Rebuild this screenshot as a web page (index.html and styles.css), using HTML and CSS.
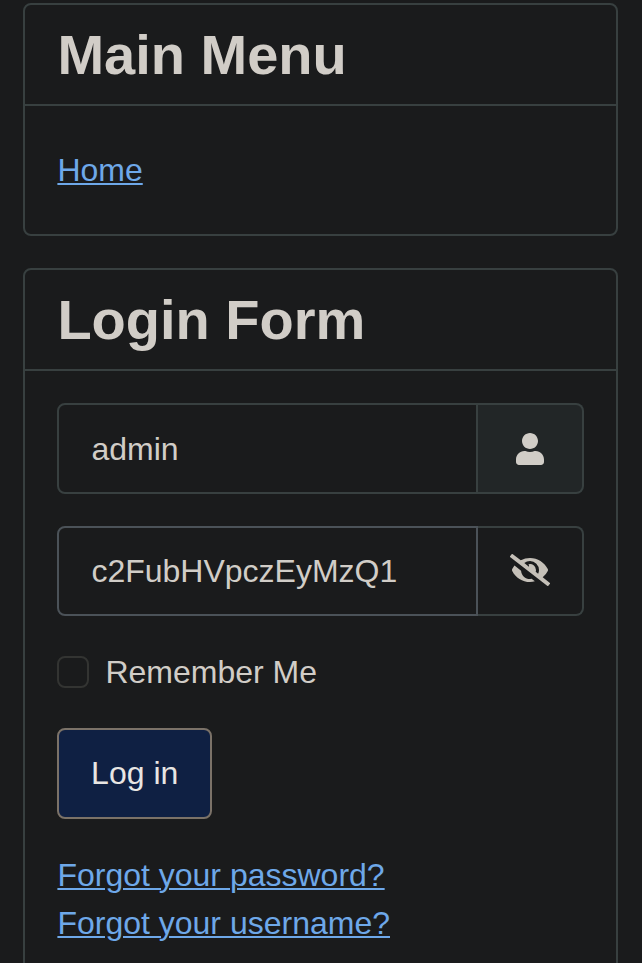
FILE: index.html
```html
<!DOCTYPE html>
<html lang="en">
<head>
<meta charset="utf-8">
<title>Login</title>
<link rel="stylesheet" href="styles.css">
</head>
<body>
<aside class="sidebar">
  <section class="card">
    <h3 class="card-header">Main Menu</h3>
    <nav class="card-body menu"><a href="#">Home</a></nav>
  </section>
  <section class="card">
    <h3 class="card-header">Login Form</h3>
    <form class="card-body login">
      <div class="input-group">
        <div class="field">admin</div>
        <span class="addon addon-user"><svg width="28" height="32" viewBox="0 0 448 512"><path d="M224 256c70.7 0 128-57.3 128-128S294.7 0 224 0 96 57.3 96 128s57.3 128 128 128zm89.6 32h-16.7c-22.2 10.2-46.9 16-72.9 16s-50.6-5.8-72.9-16h-16.7C60.2 288 0 348.2 0 422.4V464c0 26.5 21.5 48 48 48h352c26.5 0 48-21.5 48-48v-41.6c0-74.2-60.2-134.4-134.4-134.4z"/></svg></span>
      </div>
      <div class="input-group password">
        <div class="field">c2FubHVpczEyMzQ1</div>
        <span class="addon addon-eye"><svg width="40" height="32" viewBox="0 0 640 512"><path d="M320 400c-75.85 0-137.25-58.71-142.9-133.11L72.2 185.82c-13.79 17.3-26.48 35.59-36.72 55.59a32.35 32.35 0 0 0 0 29.19C89.71 376.41 197.07 448 320 448c26.91 0 52.87-4 77.89-10.46L346 397.39a144.13 144.13 0 0 1-26 2.61zm313.82 58.1l-110.55-85.44a331.25 331.25 0 0 0 81.25-102.07 32.35 32.35 0 0 0 0-29.19C550.29 135.59 442.93 64 320 64a308.15 308.15 0 0 0-147.32 37.7L45.46 3.37A16 16 0 0 0 23 6.18L3.37 31.45A16 16 0 0 0 6.18 53.9l588.36 454.73a16 16 0 0 0 22.46-2.81l19.64-25.27a16 16 0 0 0-2.82-22.45zm-183.72-142l-39.3-30.38A94.75 94.75 0 0 0 416 256a94.76 94.76 0 0 0-121.31-92.21A47.65 47.65 0 0 1 304 192a46.64 46.64 0 0 1-1.54 10l-73.61-56.89A142.31 142.31 0 0 1 320 112a143.92 143.92 0 0 1 144 144c0 21.63-5.29 41.79-13.9 60.11z"/></svg></span>
      </div>
      <label class="remember"><input type="checkbox" class="check"><span>Remember Me</span></label>
      <button type="button" class="submit">Log in</button>
      <div class="links">
        <a href="#">Forgot your password?</a>
        <a href="#">Forgot your username?</a>
      </div>
    </form>
  </section>
</aside>
</body>
</html>
```
FILE: styles.css
```css
* { box-sizing: border-box; }
html { overflow: hidden; }
body {
  margin: 0;
  height: 963px;
  overflow: hidden;
  background: #1a1b1c;
  color: #d1cdc7;
  font: 32px/48px "Liberation Sans", Arial, sans-serif;
}
.sidebar {
  display: flex;
  flex-direction: column;
  gap: 32px;
  padding: 3px 24.4px 0 23.4px;
}
.card {
  border: 2px solid #384040;
  border-radius: 8px;
}
.card-header {
  margin: 0;
  height: 101px;
  padding: 16px 32px;
  border-bottom: 2px solid #384040;
  font-size: 56px;
  line-height: 67px;
}
.menu { height: 128px; padding: 40px 32px; }
.login { padding: 32px 32px 48px; }
a {
  color: #6ea8e9;
  text-decoration: underline;
  text-decoration-thickness: 2px;
  text-underline-offset: 2px;
}
.input-group {
  display: flex;
  height: 91px;
  margin-bottom: 32px;
}
.field {
  width: 420.6px;
  padding: 20px 32px;
  border: 2px solid #384040;
  border-radius: 8px 0 0 8px;
}
.addon {
  flex: 1;
  display: flex;
  align-items: center;
  justify-content: center;
  border: 2px solid #384040;
  border-left: 0;
  border-radius: 0 8px 8px 0;
  fill: #d1cdc7;
}
.addon-user { background: #222627; }
.addon-eye { fill: #c5c0b8; padding-bottom: 2px; }
.password { height: 90px; }
.password .field { border-color: #4b5258; padding-top: 19px; }
.remember {
  display: flex;
  align-items: center;
  gap: 16px;
  height: 48px;
}
.check {
  appearance: none;
  width: 32px;
  height: 32px;
  margin: 0;
  border: 2px solid #333432;
  border-radius: 8px;
}
.submit {
  display: block;
  width: 154.6px;
  height: 91px;
  margin-top: 32px;
  padding: 0 0 2px;
  border: 2px solid #7b7268;
  border-radius: 8px;
  background: #0f2043;
  color: #e8e6e3;
  font: inherit;
}
.links {
  display: flex;
  flex-direction: column;
  align-items: flex-start;
  margin-top: 32px;
}
```
